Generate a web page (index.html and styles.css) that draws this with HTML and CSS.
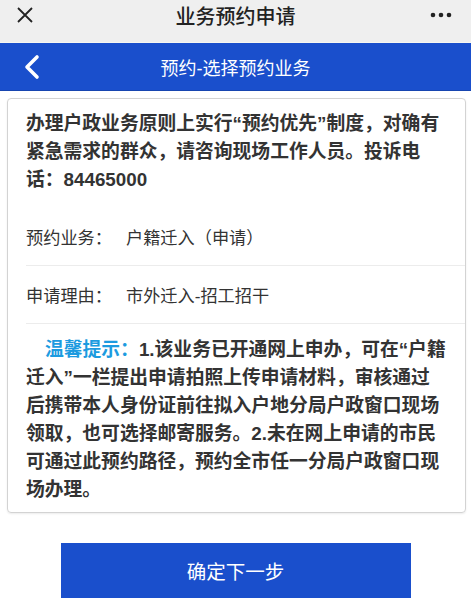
FILE: index.html
```html
<!DOCTYPE html>
<html lang="zh-CN">
<head>
<meta charset="utf-8">
<title>业务预约申请</title>
<link rel="stylesheet" href="styles.css">
</head>
<body>
<header class="topbar">
  <svg class="close" width="18" height="18" viewBox="0 0 18 18"><path d="M2 2L16 16M16 2L2 16" stroke="#222" stroke-width="1.8" fill="none"/></svg>
  <div class="top-title">业务预约申请</div>
  <svg class="more" width="22" height="6" viewBox="0 0 22 6"><circle cx="3" cy="3" r="2.3" fill="#222"/><circle cx="11" cy="3" r="2.3" fill="#222"/><circle cx="19" cy="3" r="2.3" fill="#222"/></svg>
</header>
<nav class="navbar">
  <svg class="back" width="18" height="26" viewBox="0 0 18 26"><path d="M14 3L4 13L14 23" stroke="#fff" stroke-width="3.6" fill="none" stroke-linecap="round" stroke-linejoin="round"/></svg>
  <div class="nav-title">预约-选择预约业务</div>
</nav>
<main class="card">
  <p class="notice">办理户政业务原则上实行“预约优先”制度，对确有紧急需求的群众，请咨询现场工作人员。投诉电话：84465000</p>
  <div class="row"><span class="label">预约业务：</span><span class="value">户籍迁入（申请）</span></div>
  <div class="row"><span class="label">申请理由：</span><span class="value">市外迁入-招工招干</span></div>
  <p class="tip"><span class="tip-head">温馨提示：</span><span class="tip-body">1.该业务已开通网上申办，可在“户籍迁入”一栏提出申请拍照上传申请材料，审核通过后携带本人身份证前往拟入户地分局户政窗口现场领取，也可选择邮寄服务。2.未在网上申请的市民可通过此预约路径，预约全市任一分局户政窗口现场办理。</span></p>
</main>
<button class="next">确定下一步</button>
</body>
</html>
```
FILE: styles.css
```css
* { box-sizing: border-box; }
html, body { margin: 0; padding: 0; }
body {
  width: 471px;
  background: #fff;
  font-family: "Liberation Sans", "Noto Sans CJK SC", sans-serif;
  color: #333;
}
.topbar {
  height: 43px;
  background: #efefef;
  border-bottom: 1px solid #f7f7f2;
  display: flex;
  align-items: center;
  justify-content: space-between;
  padding: 0 19px 0 16px;
  position: relative;
}
.top-title {
  position: absolute;
  left: 0; right: 0;
  text-align: center;
  font-size: 20px;
  font-weight: 500;
  color: #222;
  top: 1px;
  pointer-events: none;
}
.close { margin-top: -12px; }
.more { margin-top: -12px; }
.navbar {
  height: 48px;
  background: #1a4fcc;
  border-bottom: 1px solid #1745b0;
  display: flex;
  align-items: center;
  position: relative;
  padding-left: 23px;
}
.nav-title {
  position: absolute;
  left: 0; right: 0;
  text-align: center;
  color: #fff;
  font-size: 18px;
}
.card {
  margin: 7px 5px 0 7px;
  border: 1px solid #d3d3d3;
  border-radius: 4px;
  box-shadow: 0 1px 2px rgba(0,0,0,0.08);
  padding: 11px 0 8px 18px;
}
.notice, .tip {
  margin: 0;
  padding-right: 18px;
  font-size: 18.8px;
  line-height: 28px;
  font-weight: bold;
  color: #333;
}
.notice { margin-bottom: 14px; }
.row {
  height: 58px;
  display: flex;
  align-items: center;
  border-bottom: 1px solid #ececec;
  font-size: 17.2px;
  color: #333;
}
.label { margin-right: 14px; }
.tip { margin-top: 12px; }
.tip-head { color: #1c9be0; margin-left: 19px; }
.next {
  display: block;
  margin: 30px auto 0;
  width: 350px;
  height: 55px;
  border: none;
  border-radius: 0;
  background: #1a4fcc;
  color: #fff;
  font-family: "Liberation Sans", "Noto Sans CJK SC", sans-serif;
  font-size: 19.5px;
}
```
